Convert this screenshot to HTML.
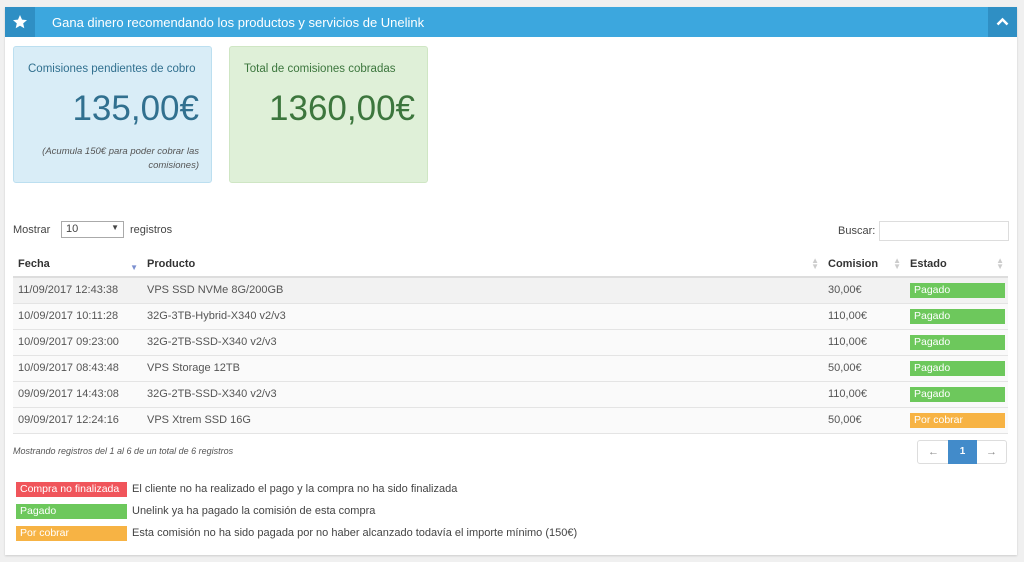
<!DOCTYPE html>
<html><head><meta charset="utf-8"><style>
*{box-sizing:border-box;margin:0;padding:0}
body{width:1024px;height:562px;background:#f0f0f0;font-family:"Liberation Sans",sans-serif;font-size:11px;color:#444;position:relative;overflow:hidden}
.panel{position:absolute;left:5px;top:7px;width:1012px;height:548px;background:#fff;box-shadow:0 1px 2px rgba(0,0,0,.15)}
.hd{position:absolute;left:0;top:0;width:1012px;height:30px;background:#3ca7de;color:#fff;font-size:13px}
.hd .ic{position:absolute;left:0;top:0;width:30px;height:30px;background:#2f8fc4}
.hd .ic2{position:absolute;right:0;top:0;width:29px;height:30px;background:#2f8fc4}
.hd .t{position:absolute;left:47px;top:8px}
.box{position:absolute;top:39px;width:199px;height:137px;border:1px solid #bcdff0;border-radius:3px}
.b1{left:8px;background:#d9edf7}
.b2{left:224px;background:#dff0d8;border-color:#cfe6c4}
.box .l{position:absolute;left:14px;top:16px;font-size:11.5px}
.box .v{position:absolute;right:12px;top:42px;font-size:35px}
.a{position:absolute;left:10px;right:12px;top:98px;font-size:9.5px;font-style:italic;text-align:right;line-height:14px;color:#555}
table{position:absolute;left:8px;top:245px;width:995px;border-collapse:collapse;font-size:11px}
th{text-align:left;font-weight:bold;height:25px;border-bottom:2px solid #ddd;padding-left:5px;position:relative;color:#333}
td{height:26px;padding-left:5px;border-bottom:1px solid #e4e4e4;background:#fafafa;color:#555}
tr:nth-child(2) td{background:#f2f2f2}
.bd{display:inline-block;width:95px;height:15px;color:#fff;font-size:10.5px;padding:1px 4px;line-height:13px}
.g{background:#6dc85c}.o{background:#f7b344}.r{background:#f0555b}
.s{position:absolute;right:4px;top:6px;color:#ccc;font-size:8px;line-height:6px}
</style></head><body>
<div class="panel">
<div class="hd"><div class="ic"><svg width="30" height="30" viewBox="0 0 30 30"><path d="M15 8l2 4.6 5 .5-3.8 3.3 1.1 4.9L15 18.8 10.7 21.3l1.1-4.9L8 13.1l5-.5z" fill="#fff"/></svg></div><span class="t">Gana dinero recomendando los productos y servicios de Unelink</span><div class="ic2"><svg width="29" height="30" viewBox="0 0 29 30"><path d="M9.5 17.5l5-5 5 5" stroke="#fff" stroke-width="2.5" fill="none"/></svg></div></div>
<div class="box b1"><div class="l" style="color:#31708f">Comisiones pendientes de cobro</div><div class="v" style="color:#31708f">135,00€</div><div class="a">(Acumula 150€ para poder cobrar las<br>comisiones)</div></div>
<div class="box b2"><div class="l" style="color:#3c763d">Total de comisiones cobradas</div><div class="v" style="color:#3c763d">1360,00€</div></div>
<div style="position:absolute;left:8px;top:217px">Mostrar</div>
<div style="position:absolute;left:56px;top:214px;width:63px;height:17px;border:1px solid #aaa;padding:1px 4px;font-size:11px">10<span style="position:absolute;right:4px;top:1px;font-size:8px">▼</span></div>
<div style="position:absolute;left:125px;top:217px">registros</div>
<div style="position:absolute;left:833px;top:218px">Buscar:</div>
<div style="position:absolute;left:874px;top:214px;width:130px;height:20px;border:1px solid #ddd"></div>
<table>
<tr><th style="width:129px">Fecha<span style="position:absolute;right:4px;top:11px;color:#7b8fd0;font-size:8px">▼</span></th><th style="width:681px">Producto<span class="s">▲<br>▼</span></th><th style="width:82px">Comision<span class="s">▲<br>▼</span></th><th>Estado<span class="s">▲<br>▼</span></th></tr>
<tr><td>11/09/2017 12:43:38</td><td>VPS SSD NVMe 8G/200GB</td><td>30,00€</td><td><span class="bd g">Pagado</span></td></tr>
<tr><td>10/09/2017 10:11:28</td><td>32G-3TB-Hybrid-X340 v2/v3</td><td>110,00€</td><td><span class="bd g">Pagado</span></td></tr>
<tr><td>10/09/2017 09:23:00</td><td>32G-2TB-SSD-X340 v2/v3</td><td>110,00€</td><td><span class="bd g">Pagado</span></td></tr>
<tr><td>10/09/2017 08:43:48</td><td>VPS Storage 12TB</td><td>50,00€</td><td><span class="bd g">Pagado</span></td></tr>
<tr><td>09/09/2017 14:43:08</td><td>32G-2TB-SSD-X340 v2/v3</td><td>110,00€</td><td><span class="bd g">Pagado</span></td></tr>
<tr><td>09/09/2017 12:24:16</td><td>VPS Xtrem SSD 16G</td><td>50,00€</td><td><span class="bd o">Por cobrar</span></td></tr>
</table>
<div style="position:absolute;left:8px;top:439px;font-size:9px;font-style:italic;color:#555">Mostrando registros del 1 al 6 de un total de 6 registros</div>
<div style="position:absolute;left:912px;top:433px;width:90px;height:24px;border:1px solid #ddd;border-radius:3px;background:#fff">
<span style="position:absolute;left:10px;top:5px;color:#888">←</span>
<span style="position:absolute;left:30px;top:-1px;width:29px;height:24px;background:#428bca;color:#fff;text-align:center;line-height:24px;font-size:10px;font-weight:bold">1</span>
<span style="position:absolute;left:68px;top:5px;color:#888">→</span></div>
<div style="position:absolute;left:11px;top:475px"><span class="bd r" style="width:111px">Compra no finalizada</span></div>
<div style="position:absolute;left:127px;top:476px">El cliente no ha realizado el pago y la compra no ha sido finalizada</div>
<div style="position:absolute;left:11px;top:497px"><span class="bd g" style="width:111px">Pagado</span></div>
<div style="position:absolute;left:127px;top:498px">Unelink ya ha pagado la comisión de esta compra</div>
<div style="position:absolute;left:11px;top:519px"><span class="bd o" style="width:111px">Por cobrar</span></div>
<div style="position:absolute;left:127px;top:520px">Esta comisión no ha sido pagada por no haber alcanzado todavía el importe mínimo (150€)</div>
</div>
</body></html>
